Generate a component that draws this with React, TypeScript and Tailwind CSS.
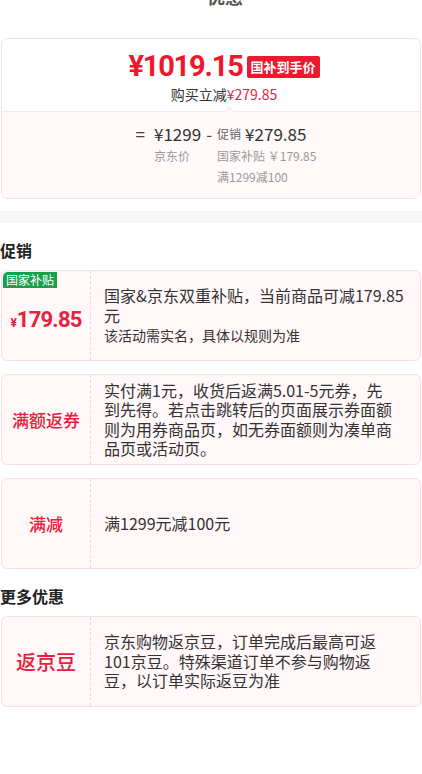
import React from "react";

const promos = [
  {
    key: "gb",
    tag: "国家补贴",
    lines: ["国家&京东双重补贴，当前商品可减179.85", "元"],
    note: "该活动需实名，具体以规则为准",
  },
  {
    key: "mfq",
    label: "满额返券",
    size: "text-[17px]",
    lines: [
      "实付满1元，收货后返满5.01-5元券，先",
      "到先得。若点击跳转后的页面展示券面额",
      "则为用券商品页，如无券面额则为凑单商",
      "品页或活动页。",
    ],
  },
  {
    key: "mj",
    label: "满减",
    size: "text-[17px]",
    lines: ["满1299元减100元"],
  },
];

const more = [
  {
    key: "jd",
    label: "返京豆",
    size: "text-[20px]",
    lines: [
      "京东购物返京豆，订单完成后最高可返",
      "101京豆。特殊渠道订单不参与购物返",
      "豆，以订单实际返豆为准",
    ],
  },
];

type Promo = {
  key: string;
  tag?: string;
  label?: string;
  size?: string;
  lines: string[];
  note?: string;
};

const PromoCard = ({ item }: { item: Promo }) => {
  return (
    <div className="relative mx-px flex min-h-[91px] rounded-[6px] border border-[#f4dfe4] bg-[#fff7f8]">
      {item.tag && (
        <span className="absolute left-px top-px rounded-tl-[5px] bg-[#17a04c] px-[3px] text-[12px] leading-[16px] text-white">
          {item.tag}
        </span>
      )}

      <div className="flex w-[89px] shrink-0 items-center justify-center border-r border-dashed border-[#ead7db]">
        {item.tag ? (
          <span className="mt-[8px] font-['Roboto',sans-serif] font-bold text-[#e5223f]">
            <span className="text-[12px]">¥</span>
            <span className="text-[22px] tracking-[-0.8px]">179.85</span>
          </span>
        ) : (
          <span className={`${item.size} font-medium text-[#e5203c]`}>{item.label}</span>
        )}
      </div>

      <div className="flex flex-1 flex-col justify-center whitespace-nowrap pl-[13px] text-[16px] leading-[19.5px] text-[#333]">
        <p>
          {item.lines.map((line, i) => (
            <React.Fragment key={i}>
              {i > 0 && <br />}
              {line}
            </React.Fragment>
          ))}
        </p>
        {item.note && <p className="text-[14px] leading-[20px]">{item.note}</p>}
      </div>
    </div>
  );
};

export default function App() {
  return (
    <div className="min-h-[774px] w-[422px] overflow-hidden bg-white font-['Noto_Sans_CJK_SC','Noto_Sans',sans-serif]">
      {/* clipped sheet title */}
      <div className="-mt-[14px] h-[20px] pl-[28px] text-center text-[18px] font-bold leading-[20px] text-[#555]">
        优惠
      </div>

      {/* price breakdown */}
      <div className="mx-px mt-[32px] overflow-hidden rounded-[6px] border border-[#f4e1e5]">
        <div className="relative flex h-[72px] flex-col items-center justify-center pl-[26px] pt-[3px]">
          <div className="flex items-center gap-[4px]">
            <span className="font-['Roboto',sans-serif] text-[29px] font-bold leading-[34px] tracking-[-1.2px] text-[#f2162c]">
              ¥1019.15
            </span>
            <span className="mt-[2px] rounded-[2px] bg-[#ec1a2e] px-[4px] text-[13px] font-bold leading-[22px] text-white">
              国补到手价
            </span>
          </div>
          <div className="mt-[1px] text-[14px] leading-[20px] text-[#333]">
            购买立减<span className="text-[#e5223f]">¥279.85</span>
          </div>
          <span className="absolute bottom-[-4px] left-[224px] h-[7px] w-[7px] rotate-45 border-l border-t border-[#f8e8eb] bg-[#fff9f9]" />
        </div>

        <div className="flex justify-center border-t border-[#f8e8eb] bg-[#fff9f9] pb-[11px] pl-[30px] pt-[11px] text-[#999]">
          <span className="text-[17px] leading-[22px] text-[#444]">=</span>
          <div className="ml-[9px] flex flex-col items-start">
            <span className="text-[17px] leading-[22px] text-[#333]">¥1299</span>
            <span className="text-[12px] leading-[21px]">京东价</span>
          </div>
          <span className="mx-[5px] text-[17px] leading-[22px] text-[#444]">-</span>
          <div className="flex flex-col items-start">
            <span className="flex items-center leading-[22px]">
              <span className="text-[12px] text-[#666]">促销</span>
              <span className="ml-[4px] text-[17px] text-[#333]">¥279.85</span>
            </span>
            <span className="text-[12px] leading-[21px]">国家补贴 ￥179.85</span>
            <span className="text-[12px] leading-[21px]">满1299减100</span>
          </div>
        </div>
      </div>

      <div className="mt-[12px] h-[12px] bg-[#f6f7f9]" />

      <h2 className="mt-[16px] text-[16px] font-bold leading-[22px] text-[#222]">促销</h2>
      <div className="mt-[9px] flex flex-col gap-[13px]">
        {promos.map((p) => (
          <PromoCard key={p.key} item={p} />
        ))}
      </div>

      <h2 className="mt-[16px] text-[16px] font-bold leading-[22px] text-[#222]">更多优惠</h2>
      <div className="mt-[9px] flex flex-col gap-[13px]">
        {more.map((p) => (
          <PromoCard key={p.key} item={p} />
        ))}
      </div>
    </div>
  );
}
